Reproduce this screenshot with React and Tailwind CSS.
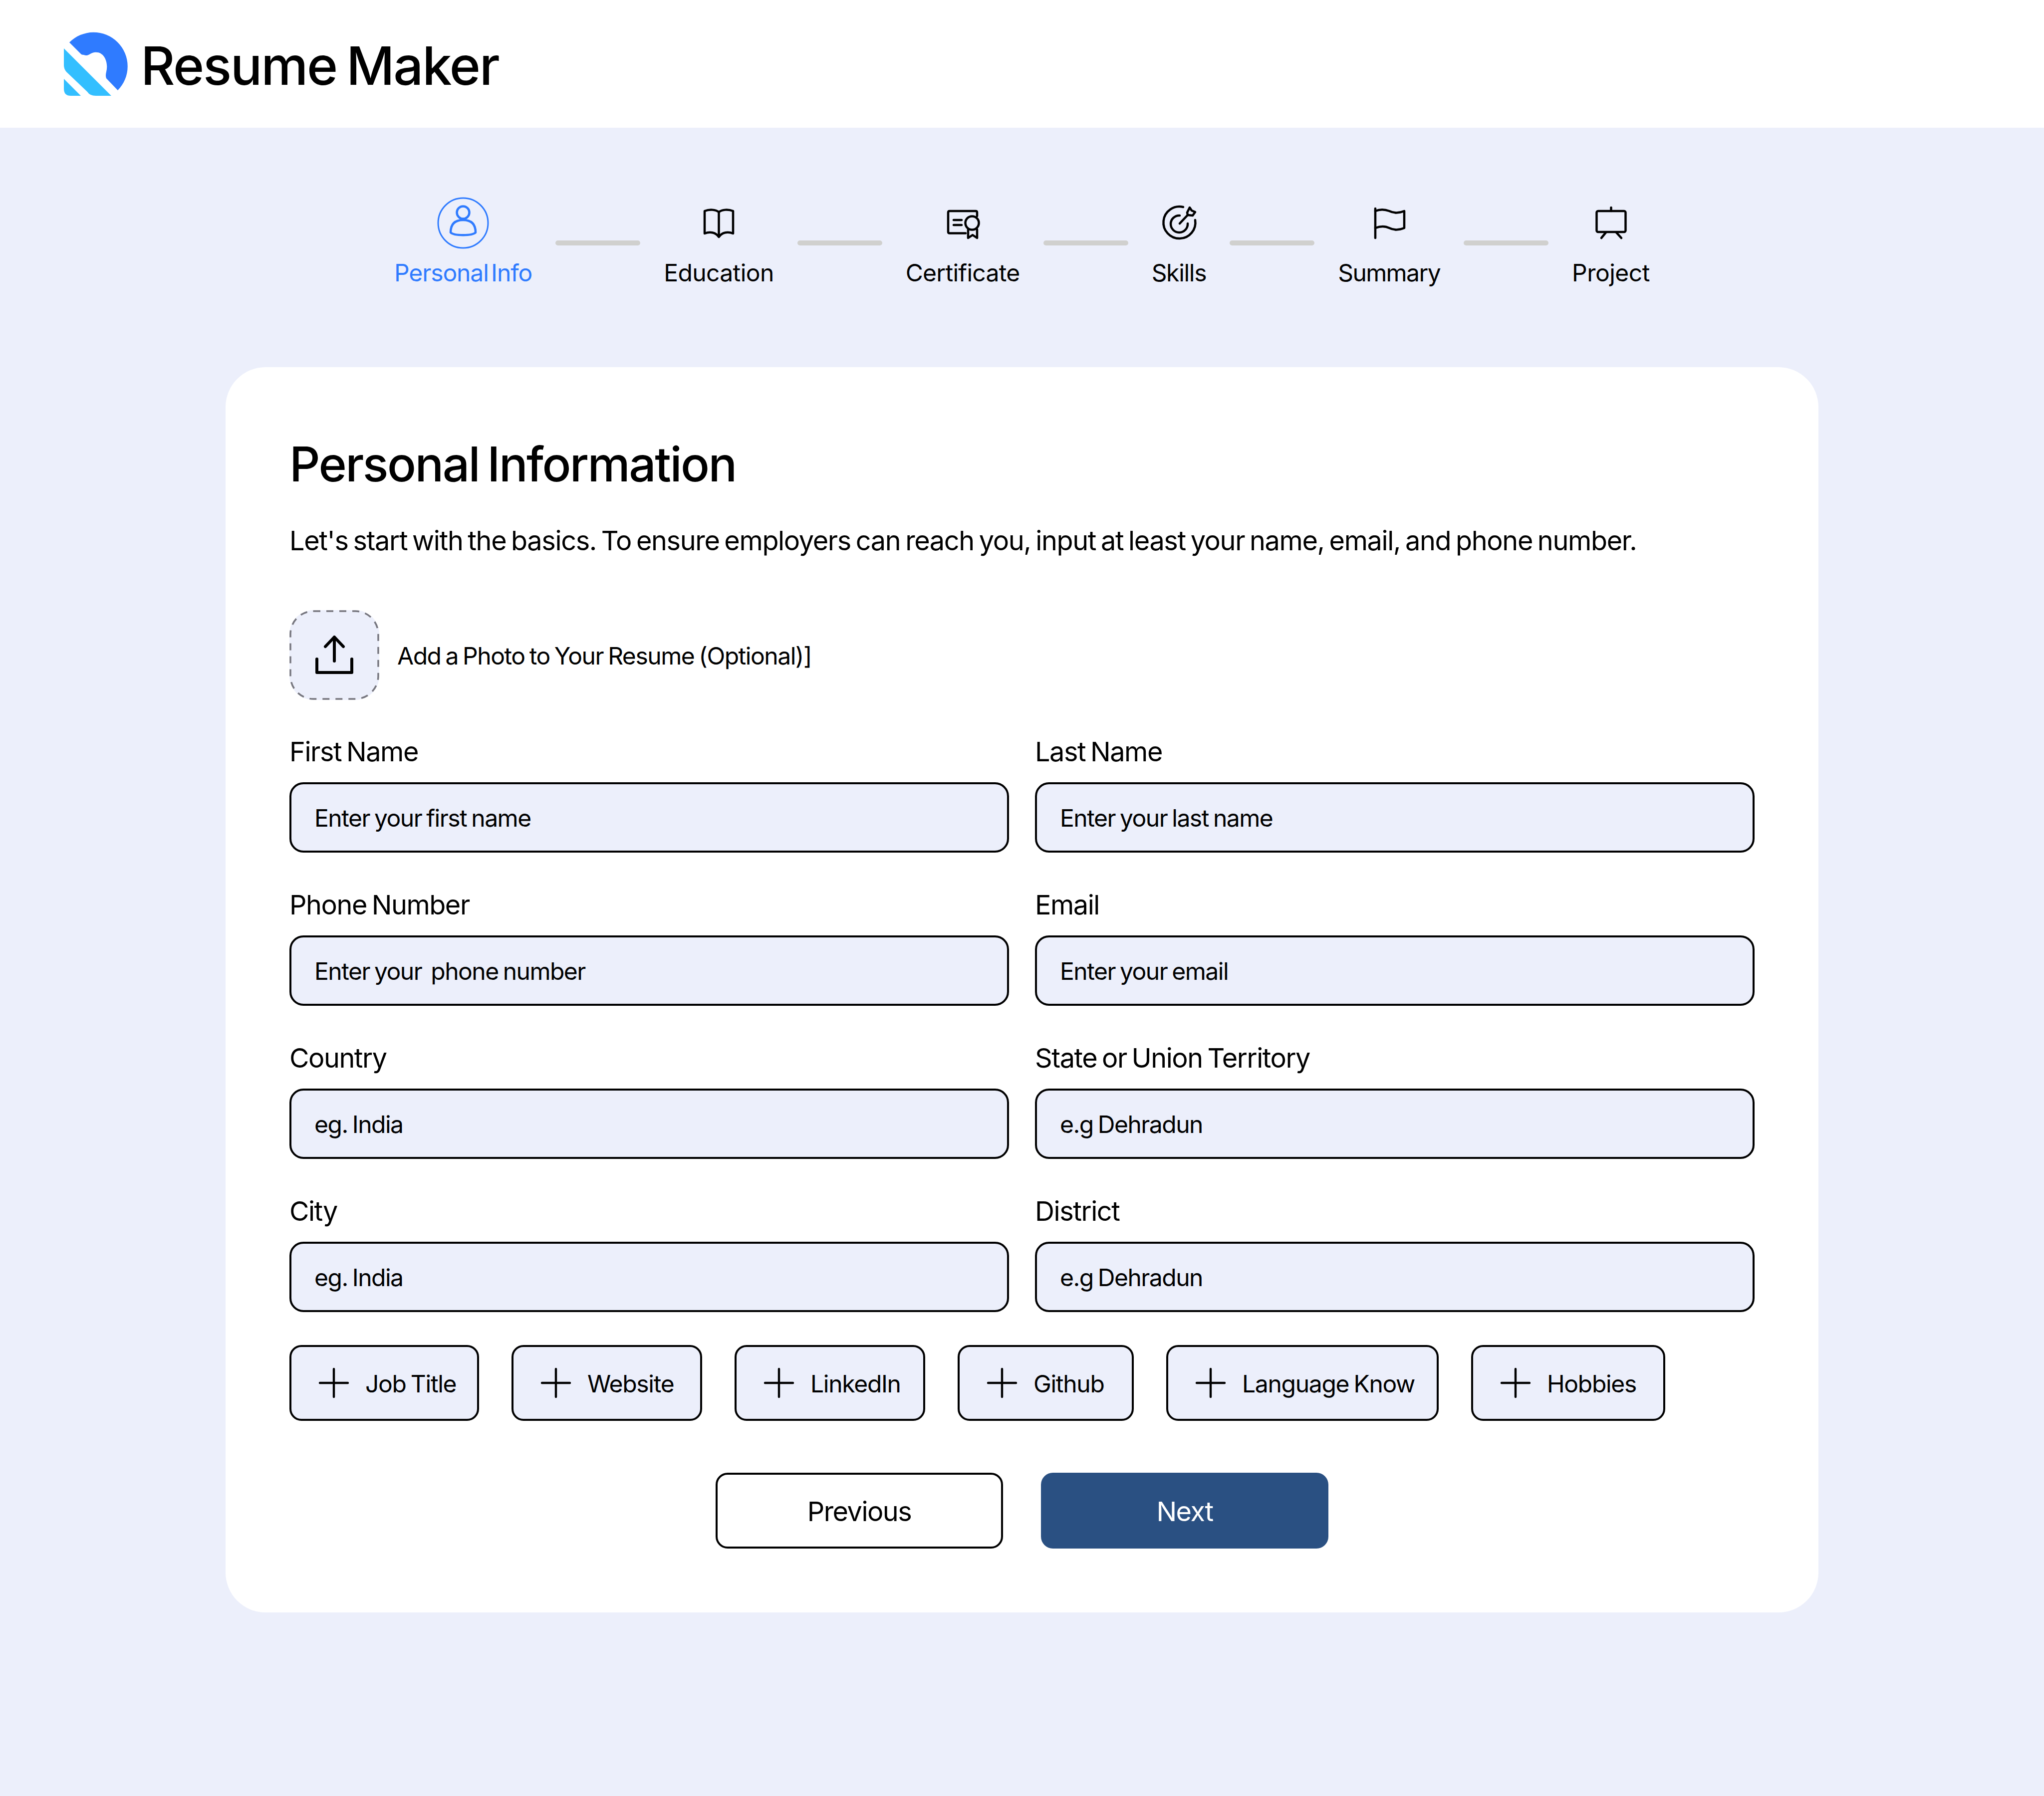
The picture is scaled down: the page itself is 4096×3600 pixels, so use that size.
import React from "react";
import { Plus } from "lucide-react";

const fields = [
  ["First Name", "Enter your first name"],
  ["Last Name", "Enter your last name"],
  ["Phone Number", "Enter your  phone number"],
  ["Email", "Enter your email"],
  ["Country", "eg. India"],
  ["State or Union Territory", "e.g Dehradun"],
  ["City", "eg. India"],
  ["District", "e.g Dehradun"],
];

const chips = [
  ["Job Title", "w-[380px]"],
  ["Website", "w-[382px]"],
  ["LinkedIn", "w-[382px]"],
  ["Github", "w-[353px]"],
  ["Language Know", "w-[546px]"],
  ["Hobbies", "w-[389px]"],
];

const Logo = () => (
  <svg viewBox="0 0 128 128" className="w-32 h-32 shrink-0">
    <path d="M11 21A64 64 0 1 1 108 117L85 93Q83 88 85 80C90 60 80 38 61 41C53 42 48 50 40 46Q37 46 35 45Z" fill="#2f7bff" />
    <path d="M0 33L95 128H64Q52 128 47 120L5 80Q0 74 0 67Z" fill="#33bfff" />
    <path d="M0 94L34 128H14Q0 128 0 114Z" fill="#33bfff" />
  </svg>
);

const PersonIcon = () => (
  <svg viewBox="0 0 104 104" fill="none" stroke="#2f7bff" className="w-[104px] h-[104px]">
    <circle cx="52" cy="52" r="50" strokeWidth="3" />
    <circle cx="52" cy="31" r="12.5" strokeWidth="4.5" />
    <path d="M27 71C27 52 38 46 52 46C66 46 77 52 77 71C70 78 34 78 27 71Z" strokeWidth="4.5" strokeLinejoin="round" />
  </svg>
);

const BookIcon = () => (
  <svg viewBox="0 -3 100 100" fill="none" stroke="#000" strokeWidth="4.5" strokeLinejoin="round" className="w-[100px] h-[100px]">
    <path d="M50.5 25C44 20 32 19 22 23V68C32 64 44 65 50.5 75C57 65 69 64 79 68V23C69 19 57 20 50.5 25Z" />
    <path d="M50.5 25V75" />
  </svg>
);

const CertIcon = () => (
  <svg viewBox="0 -3 100 100" fill="none" stroke="#000" strokeWidth="4.5" strokeLinecap="round" strokeLinejoin="round" className="w-[100px] h-[100px]">
    <path d="M56 67.5H24Q21 67.5 21 64.5V26Q21 23 24 23H76Q79 23 79 26V33" />
    <path d="M32 41H48M32 51H48" />
    <circle cx="69" cy="47" r="13.5" />
    <path d="M61 60V77L70 71L79 77V60" />
  </svg>
);

const TargetIcon = () => (
  <svg viewBox="0 -3 100 100" fill="none" stroke="#000" strokeWidth="4.5" strokeLinecap="round" strokeLinejoin="round" className="w-[100px] h-[100px]">
    <path d="M59 15A32 32 0 1 0 83 41" />
    <path d="M52 32A17 17 0 1 0 68 48" />
    <path d="M52 48L68 31" />
    <path d="M68 31L67 26L72 16L76 22L83 25L78 32Z" />
  </svg>
);

const FlagIcon = () => (
  <svg viewBox="0 -3 100 100" fill="none" stroke="#000" strokeWidth="4.5" strokeLinecap="round" strokeLinejoin="round" className="w-[100px] h-[100px]">
    <path d="M22 18V77" />
    <path d="M22 23C32 19 42 20 50 23C58 27 68 28 80 23V57C68 62 58 61 50 57C42 53 32 53 22 57" />
  </svg>
);

const BoardIcon = () => (
  <svg viewBox="0 -3 100 100" fill="none" stroke="#000" strokeWidth="4.5" strokeLinecap="round" strokeLinejoin="round" className="w-[100px] h-[100px]">
    <path d="M50.5 16V23" />
    <rect x="21.5" y="23" width="58" height="42" rx="3" />
    <path d="M40 66L31 77M61 66L71 77" />
  </svg>
);

const UploadIcon = () => (
  <svg viewBox="0 0 80 80" fill="none" stroke="#000" strokeWidth="6" strokeLinecap="round" strokeLinejoin="round" className="w-20 h-20">
    <path d="M40 52V4M22 23L40 4L58 23" />
    <path d="M5 48V75H75V48" />
  </svg>
);

const steps = [
  { label: "Personal Info", icon: <PersonIcon />, active: true, track: "tracking-[-1.1px]" },
  { label: "Education", icon: <BookIcon />, track: "tracking-[-0.6px]" },
  { label: "Certificate", icon: <CertIcon />, track: "tracking-[-0.7px]" },
  { label: "Skills", icon: <TargetIcon />, track: "tracking-[-1.3px]" },
  { label: "Summary", icon: <FlagIcon />, track: "tracking-[-1.6px]" },
  { label: "Project", icon: <BoardIcon />, track: "tracking-[-0.5px]", last: true },
];

const App = () => {
  return (
    <div className="w-[4096px] h-[3600px] bg-[#eceffb] text-black font-['Inter',sans-serif]">
      {/* Header */}
      <div className="h-64 bg-white flex items-center pl-32 gap-[26px]">
        <Logo />
        <h1 className="pt-2 text-[106px] font-medium tracking-[-2.3px] [word-spacing:-7px] leading-none">Resume Maker</h1>
      </div>

      {/* Stepper */}
      <div className="flex justify-center items-start gap-[47px] pt-[139px] h-[480px]">
        {steps.map((s) => (
          <React.Fragment key={s.label}>
            <div className="flex flex-col items-center w-min">
              <div className="h-[104px] w-[104px] flex items-center justify-center">{s.icon}</div>
              <span className={`mt-4 text-[48px] leading-[64px] [word-spacing:-7px] whitespace-nowrap ${s.track} ${s.active ? "text-[#2f7bff]" : ""}`}>
                {s.label}
              </span>
            </div>
            {!s.last && <div className="w-[170px] h-2.5 rounded-full bg-[#d0d0ce] mt-[87px]" />}
          </React.Fragment>
        ))}
      </div>

      {/* Card */}
      <div className="ml-[452px] w-[3192px] h-[2496px] bg-white rounded-[80px] px-32 pt-[138px]">
        <h2 className="text-[96px] font-medium tracking-[-2.55px] [word-spacing:-7px] leading-[112px]">Personal Information</h2>
        <p className="mt-[62px] text-[54px] leading-[72px] tracking-[-1.36px] [word-spacing:-4px]">
          Let's start with the basics. To ensure employers can reach you, input at least your name, email, and phone number.
        </p>

        <div className="mt-[103px] flex items-center gap-9">
          <div className="relative w-[180px] h-[180px] rounded-[48px] bg-[#eceffb] flex items-center justify-center">
            <svg viewBox="0 0 180 180" fill="none" className="absolute inset-0">
              <rect x="2" y="2" width="176" height="176" rx="46" stroke="#77777f" strokeWidth="3.5" strokeDasharray="14 12" />
            </svg>
            <UploadIcon />
          </div>
          <span className="pt-1 text-[48px] tracking-[-1.46px] [word-spacing:-3px]">Add a Photo to Your Resume (Optional)]</span>
        </div>

        <div className="mt-[72px] grid grid-cols-2 gap-x-[52px] gap-y-[73px]">
          {fields.map(([label, placeholder], i) => (
            <div key={i}>
              <div className="text-[54px] leading-[64px] tracking-[-1.45px] [word-spacing:-4px] mb-[29px]">{label}</div>
              <div className="h-[141px] rounded-[28px] border-4 border-black bg-[#eceffb] pl-[46px] pt-[3px] flex items-center text-[48px] tracking-[-1.5px] [word-spacing:-3px] whitespace-pre">
                {placeholder}
              </div>
            </div>
          ))}
        </div>

        <div className="mt-[66px] flex gap-[65px]">
          {chips.map(([label, w]) => (
            <div key={label} className={`${w} h-[152px] rounded-3xl border-4 border-black bg-[#eceffb] flex items-center pl-[37px] gap-[15px]`}>
              <Plus size={96} strokeWidth={1.1} className="shrink-0" />
              <span className="pt-[3px] text-[48px] tracking-[-1.3px] [word-spacing:-3px]">{label}</span>
            </div>
          ))}
        </div>

        <div className="mt-[104px] flex justify-center gap-[76px]">
          <button className="w-[576px] h-[152px] pt-[3px] rounded-3xl border-4 border-black bg-white text-[54px] tracking-[-1.5px]">Previous</button>
          <button className="w-[576px] h-[152px] pt-[3px] rounded-3xl bg-[#2a5082] text-white text-[54px] tracking-[-1.5px]">Next</button>
        </div>
      </div>
    </div>
  );
};

export default App;
